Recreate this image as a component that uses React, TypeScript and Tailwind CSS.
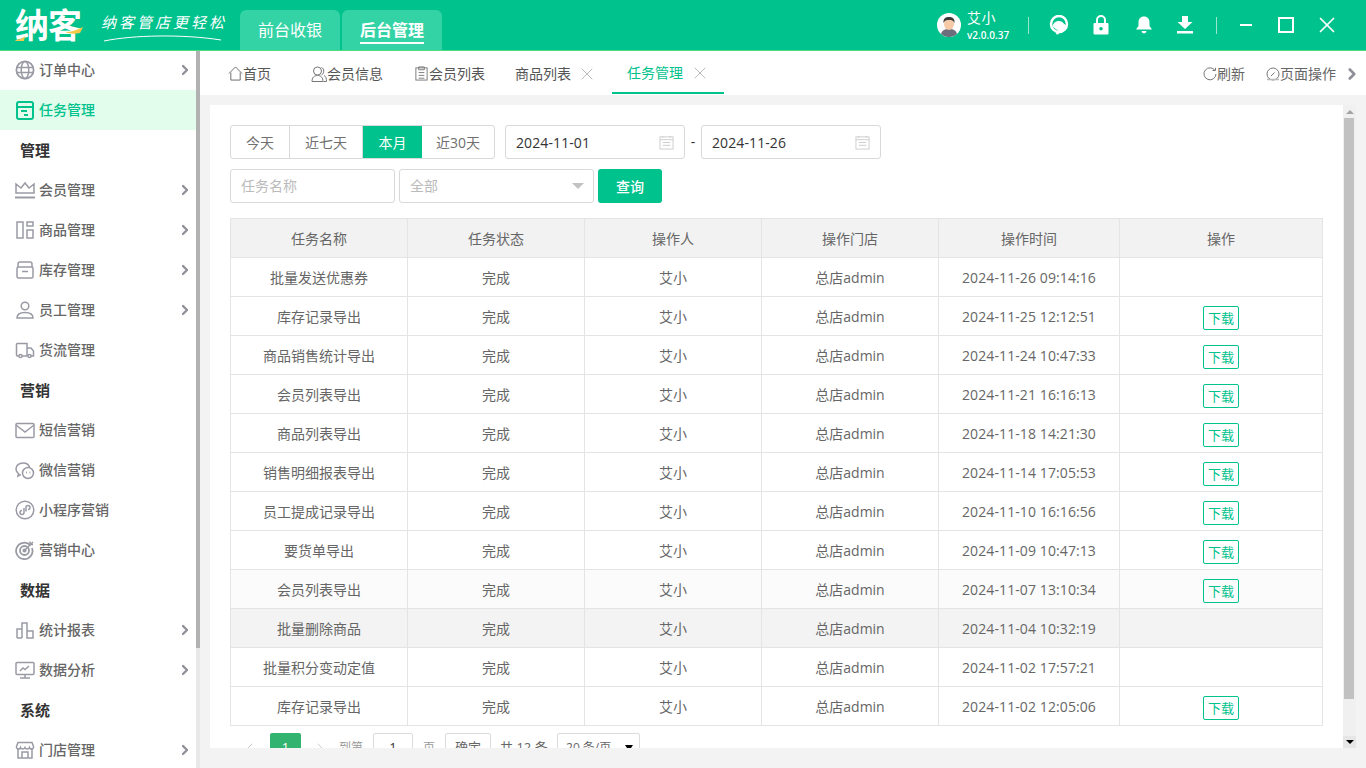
import type { ReactNode } from 'react';
import { ChevronLeft, ChevronRight, X } from 'lucide-react';

const FONT = 'font-["Open_Sans","Noto_Sans_CJK_SC",sans-serif]';

// sidebar line icons, all on a 20x20 box
const Ico = ({ children }: { children: ReactNode }) => (
  <svg viewBox="0 0 20 20" className="h-5 w-5 shrink-0" fill="none" stroke="currentColor" strokeWidth="1.5">
    {children}
  </svg>
);

const icons: Record<string, ReactNode> = {
  globe: (
    <Ico>
      <circle cx="10" cy="10" r="8.6" strokeWidth="1.8" />
      <ellipse cx="10" cy="10" rx="3.8" ry="8.6" />
      <path d="M1.5 7.5h17M1.5 12.5h17" />
    </Ico>
  ),
  task: (
    <Ico>
      <rect x="2" y="2" width="16" height="17" rx="2" strokeWidth="2" />
      <path d="M2 7h16" strokeWidth="2" />
      <path d="M6 11h6M9 15h4" strokeWidth="1.8" />
    </Ico>
  ),
  crown: (
    <Ico>
      <path d="M1 13V4l5 4 4-5 4 5 5-4v9z" />
      <path d="M0 17.5h20" strokeWidth="2" />
    </Ico>
  ),
  goods: (
    <Ico>
      <rect x="2" y="2" width="6" height="16" />
      <rect x="12" y="2" width="6" height="4" />
      <rect x="12" y="10" width="6" height="8" />
    </Ico>
  ),
  box: (
    <Ico>
      <path d="M3 7V4a2 2 0 0 1 2-2h10a2 2 0 0 1 2 2v3" />
      <rect x="2" y="7" width="16" height="11" rx="1.5" />
      <path d="M7 11.5h6" />
    </Ico>
  ),
  user: (
    <Ico>
      <circle cx="10" cy="6" r="3.8" />
      <path d="M2 18c0-3.5 3-5.5 8-5.5s8 2 8 5.5z" />
    </Ico>
  ),
  truck: (
    <Ico>
      <path d="M4 16H2.5A1 1 0 0 1 1.500 15V4.500A1 1 0 0 1 2.500 3.500H12V16H7" />
      <path d="M12 8h4l2.500 3v5H16" />
      <circle cx="5.500" cy="16" r="1.600" />
      <circle cx="14.500" cy="16" r="1.600" />
    </Ico>
  ),
  mail: (
    <Ico>
      <rect x="1" y="3.500" width="18" height="14" rx="1" />
      <path d="M1 5l9 7 9-7" />
    </Ico>
  ),
  wechat: (
    <Ico>
      <path d="M8 3C4 3 1 5.500 1 9c0 2 1 3.500 2.500 4.500L3 16l2.800-1.500" />
      <path d="M8 3c3.500 0 6 2 6.500 4.500" />
      <circle cx="13" cy="13" r="5.500" />
      <path d="M11 12.500h.8M14.500 12.500h.8" strokeWidth="1.800" />
    </Ico>
  ),
  mini: (
    <Ico>
      <circle cx="10" cy="10" r="8.800" />
      <path d="M9 8v4.500a2 2 0 1 1-2-2M11 11.500V7.500a2 2 0 1 1 2 2" />
    </Ico>
  ),
  target: (
    <Ico>
      <path d="M15.500 5.500A8.200 8.200 0 1 0 17 8" strokeWidth="1.800" />
      <circle cx="9.500" cy="10.500" r="4.500" strokeWidth="1.800" />
      <circle cx="9.500" cy="10.500" r="1.300" fill="currentColor" />
      <path d="M10 10l8-8M15 1.500v3h3" />
    </Ico>
  ),
  chart: (
    <Ico>
      <path d="M2 18V9h5v9M7 18V3h5v15M12 18v-7h6v7zM2 18h5" />
    </Ico>
  ),
  monitor: (
    <Ico>
      <rect x="1" y="2.500" width="18" height="12" rx="1" />
      <path d="M5 11l3-3 2 1.500 4-3.500M10 14.500V18M5 18h10" />
    </Ico>
  ),
  store: (
    <Ico>
      <path d="M3 8v10h14V8" />
      <path d="M3 2.500h14l1.500 4a2 2 0 0 1-4 1 2.500 2.500 0 0 1-4.500 0 2.500 2.500 0 0 1-4.500 0 2 2 0 0 1-4-1z" />
      <path d="M7 18v-6h6v6" />
    </Ico>
  ),
};

type Nav = { label: string; icon?: string; arrow?: boolean; active?: boolean };

const nav: Nav[] = [
  { label: '订单中心', icon: 'globe', arrow: true },
  { label: '任务管理', icon: 'task', active: true },
  { label: '管理' },
  { label: '会员管理', icon: 'crown', arrow: true },
  { label: '商品管理', icon: 'goods', arrow: true },
  { label: '库存管理', icon: 'box', arrow: true },
  { label: '员工管理', icon: 'user', arrow: true },
  { label: '货流管理', icon: 'truck' },
  { label: '营销' },
  { label: '短信营销', icon: 'mail' },
  { label: '微信营销', icon: 'wechat' },
  { label: '小程序营销', icon: 'mini' },
  { label: '营销中心', icon: 'target' },
  { label: '数据' },
  { label: '统计报表', icon: 'chart', arrow: true },
  { label: '数据分析', icon: 'monitor', arrow: true },
  { label: '系统' },
  { label: '门店管理', icon: 'store', arrow: true },
];

const rows = [
  { name: '批量发送优惠券', time: '2024-11-26 09:14:16', dl: false },
  { name: '库存记录导出', time: '2024-11-25 12:12:51', dl: true },
  { name: '商品销售统计导出', time: '2024-11-24 10:47:33', dl: true },
  { name: '会员列表导出', time: '2024-11-21 16:16:13', dl: true },
  { name: '商品列表导出', time: '2024-11-18 14:21:30', dl: true },
  { name: '销售明细报表导出', time: '2024-11-14 17:05:53', dl: true },
  { name: '员工提成记录导出', time: '2024-11-10 16:16:56', dl: true },
  { name: '要货单导出', time: '2024-11-09 10:47:13', dl: true },
  { name: '会员列表导出', time: '2024-11-07 13:10:34', dl: true, bg: 'bg-[#fbfbfb]' },
  { name: '批量删除商品', time: '2024-11-04 10:32:19', dl: false, bg: 'bg-[#f3f3f3]' },
  { name: '批量积分变动定值', time: '2024-11-02 17:57:21', dl: false },
  { name: '库存记录导出', time: '2024-11-02 12:05:06', dl: true },
];

function Header() {
  return (
    <header className="flex h-[51px] shrink-0 items-stretch border-b border-[#4fdc86] bg-[#00c28c] text-white">
      <div className="relative ml-[15px] flex w-[70px] items-center">
        <span className="text-[34px] font-bold leading-none tracking-[-1px]">纳客</span>
        <svg viewBox="0 0 70 30" className="absolute left-0 top-[12px] h-[30px] w-[70px]" fill="none">
          <path d="M0 28c3 0 7-1 10-4l-1 5H1z" fill="#f7c948" />
          <path d="M50 20c6 0 12-2 18-5l-3 6c-5 1-10 1-15-1z" fill="#f7c948" />
        </svg>
      </div>
      <div className="relative ml-[16px] w-[125px] pt-[13px] text-[15px] italic leading-[18px] tracking-[3px] whitespace-nowrap">
        纳客管店更轻松
        <svg viewBox="0 0 120 8" className="absolute left-[2px] top-[34px] h-[8px] w-[120px]" fill="none">
          <path d="M1 7C30 1 80 0 118 6" stroke="white" strokeWidth="1" />
        </svg>
      </div>
      <div className="ml-[14px] flex items-end gap-[2px]">
        <div className="flex h-[40px] w-[100px] items-center justify-center rounded-t-md bg-[#34d3a5] text-base">前台收银</div>
        <div className="flex h-[40px] w-[100px] items-center justify-center rounded-t-md bg-[#34d3a5] text-base font-bold">
          <span className="mt-[2px] border-b-2 border-white leading-[24px]">后台管理</span>
        </div>
      </div>

      <div className="ml-auto flex items-center">
        <svg viewBox="0 0 24 24" className="h-6 w-6">
          <circle cx="12" cy="12" r="12" fill="white" />
          <path d="M4 21c1-4 4-5 8-5s7 1 8 5a12 12 0 0 1-16 0z" fill="#6b6f7b" />
          <ellipse cx="12" cy="11" rx="5" ry="6" fill="#f5c9a6" />
          <path d="M6.500 10C6 5 9 4 12 4s6 1 5.500 6c-1-2.500-3-3-5.500-3s-4.500.5-5.500 3z" fill="#3a3a3a" />
        </svg>
        <div className="ml-[6px] w-[61px]">
          <div className="text-[14px] leading-[17px] tracking-[0.5px]">艾小</div>
          <div className="mt-[2px] text-[10px] font-semibold leading-[14px]">v2.0.0.37</div>
        </div>
        <div className="h-[17px] w-px bg-white/60" />
        <svg viewBox="0 0 20 20" className="ml-[20px] h-5 w-5" fill="none" stroke="white">
          <circle cx="10" cy="9" r="8" strokeWidth="2.500" />
          <path d="M4 12c0-4 3-5.500 6-5.500 2 0 4 1 5 3l2 1c-1 3-3 5-6 6.500" fill="white" strokeWidth="1" />
          <circle cx="8.500" cy="18" r="1.500" fill="white" stroke="none" />
        </svg>
        <svg viewBox="0 0 16 20" className="ml-[24px] h-5 w-4" fill="white">
          <path d="M3 8V5a5 5 0 0 1 10 0v3h-2V5a3 3 0 0 0-6 0v3z" />
          <path fillRule="evenodd" d="M1.500 8h13a1 1 0 0 1 1 1v9.500a1 1 0 0 1-1 1h-13a1 1 0 0 1-1-1V9a1 1 0 0 1 1-1zM8 12a1.800 1.800 0 1 0 0 3.600A1.800 1.800 0 0 0 8 12z" />
        </svg>
        <svg viewBox="0 0 18 20" className="ml-[26px] h-5 w-[18px]" fill="white">
          <path d="M9 1.500c3.500 0 5.500 2.500 5.500 6v3.500l2.500 3.500H1L3.500 11V7.500c0-3.500 2-6 5.500-6z" />
          <path d="M6.500 16h5a2.500 2.500 0 0 1-5 0z" />
        </svg>
        <svg viewBox="0 0 16 18" className="ml-[24px] h-[18px] w-4" fill="white">
          <path d="M5 0h6v6h4.500L8 13 .5 6H5z" />
          <rect x="0" y="15" width="16" height="2.500" />
        </svg>
        <div className="ml-[23px] h-[17px] w-px bg-white/60" />
        <div className="ml-[23px] h-[2px] w-[12px] bg-white" />
        <div className="ml-[26px] h-[16px] w-[16px] border-2 border-white" />
        <X className="ml-[20px] mr-[26px] h-[26px] w-[26px]" strokeWidth={1.6} />
      </div>
    </header>
  );
}

function Sidebar() {
  return (
    <aside className="flex w-[200px] shrink-0 bg-white">
      <div className="-mt-px w-[196px] overflow-hidden">
        {nav.map((n) =>
          n.icon ? (
            <div
              key={n.label}
              className={`flex h-10 items-center pl-[15px] pr-[3px] text-sm font-medium ${
                n.active ? 'bg-[#e3fded] text-[#00c28c]' : 'text-[#666] '
              }`}
            >
              <span className={n.active ? 'text-[#00c28c]' : 'text-[#9a9aa5]'}>{icons[n.icon]}</span>
              <span className="ml-[4px] flex-1 leading-[20px]">{n.label}</span>
              {n.arrow && <ChevronRight className="h-4 w-4 text-[#8f8f99]" strokeWidth={3.5} />}
            </div>
          ) : (
            <div key={n.label} className="flex h-10 items-center pl-[20px] text-[15px] font-bold text-[#333]">
              {n.label}
            </div>
          ),
        )}
      </div>
      <div className="flex w-[4px] flex-col">
        <div className="h-[597px] bg-[#b2b2b2]" />
        <div className="flex-1 bg-[#e8e8e8]" />
      </div>
    </aside>
  );
}

const HomeIcon = () => (
  <svg viewBox="0 0 16 16" className="h-[15px] w-[15px]" fill="none" stroke="#666">
    <path d="M1 8l7-7 7 7M3 7v8h10V7" />
  </svg>
);
const PeopleIcon = () => (
  <svg viewBox="0 0 16 16" className="h-4 w-4" fill="none" stroke="#777">
    <circle cx="6.500" cy="5" r="4" />
    <path d="M1 15.500c0-4 2-6 5.500-6s5.500 2 5.500 6zM10.500 1.500c3 1 3 6 0 7.500M13 9.500c2 1 2.500 3 2.500 6h-3" />
  </svg>
);
const ClipIcon = () => (
  <svg viewBox="0 0 16 16" className="h-[15px] w-[15px]" fill="none" stroke="#777">
    <rect x="2" y="2" width="12" height="13" />
    <path d="M5 1h6v3H5zM5 7h6M5 10h6M5 13h6" />
  </svg>
);
const CalIcon = () => (
  <svg viewBox="0 0 16 16" className="h-[15px] w-[15px]" fill="none" stroke="#ccc">
    <rect x="1" y="2" width="14" height="13" />
    <path d="M1 5h14M4 1v2M12 1v2M4 8h8M4 11h8" />
  </svg>
);

function Tabs() {
  return (
    <div className="flex h-[44px] shrink-0 items-center bg-white text-sm text-[#555]">
      <div className="ml-[28px] flex items-center pt-px"><HomeIcon />首页</div>
      <div className="ml-[40px] flex items-center pt-px"><PeopleIcon />会员信息</div>
      <div className="ml-[31px] flex items-center pt-px"><ClipIcon />会员列表</div>
      <div className="ml-[30px] flex items-center pt-px">
        商品列表
        <X className="ml-[6px] h-5 w-5 text-[#bbb]" strokeWidth={1.2} />
      </div>
      <div className="ml-[15px] flex h-[43px] items-center self-start border-b-2 border-[#00c28c] pl-[15px] pr-[14px] pt-[2px] text-[#00c28c]">
        任务管理
        <X className="ml-[7px] h-5 w-5 text-[#bbb]" strokeWidth={1.2} />
      </div>
      <div className="ml-auto flex items-center pt-px text-[#666]">
        <svg viewBox="0 0 14 14" className="h-[14px] w-[14px]" fill="none" stroke="#777">
          <path d="M12 3.500A6 6 0 1 0 13 7M9.500 3.500H12.500V.8" />
        </svg>
        刷新
        <svg viewBox="0 0 14 14" className="ml-[21px] h-[14px] w-[14px]" fill="none" stroke="#777">
          <circle cx="7" cy="7" r="6" />
          <path d="M5 9l3.500-3.500" />
          <path d="M1 12.500h12" stroke="#bbb" strokeWidth="1.500" />
        </svg>
        页面操作
        <ChevronRight className="ml-[7px] mr-[5px] h-[18px] w-[18px] text-[#8f8f99]" strokeWidth={3.5} />
      </div>
    </div>
  );
}

function Filters() {
  const seg = 'flex h-full items-center justify-center border-r border-[#d9d9d9] pt-px';
  const box = 'flex h-[34px] items-center rounded-[3px] border border-[#d9d9d9] bg-white';
  return (
    <>
      <div className="flex items-center">
        <div className="flex h-[34px] w-[265px] overflow-hidden rounded-[3px] border border-[#d9d9d9] text-sm text-[#707070]">
          <div className={`${seg} w-[59px]`}>今天</div>
          <div className={`${seg} w-[73px]`}>近七天</div>
          <div className="flex h-full w-[59px] items-center justify-center bg-[#00c28c] pt-px text-white">本月</div>
          <div className="flex h-full flex-1 items-center justify-center pt-px">近30天</div>
        </div>
        <div className={`${box} ml-[10px] w-[180px] justify-between px-[10px] text-sm text-[#333]`}>
          <span className="pt-px tracking-[0.1px]">2024-11-01</span>
          <CalIcon />
        </div>
        <span className="w-[16px] text-center text-sm text-[#333]">-</span>
        <div className={`${box} w-[180px] justify-between px-[10px] text-sm text-[#333]`}>
          <span className="pt-px tracking-[0.1px]">2024-11-26</span>
          <CalIcon />
        </div>
      </div>
      <div className="mt-[10px] flex items-center">
        <div className={`${box} w-[165px] px-[10px] text-sm text-[#bbb]`}>任务名称</div>
        <div className={`${box} ml-[4px] w-[195px] justify-between pl-[10px] pr-[9px] text-sm text-[#bbb]`}>
          全部
          <span className="h-0 w-0 border-x-[6px] border-t-[6px] border-x-transparent border-t-[#c2c2c2]" />
        </div>
        <div className="ml-[4px] flex h-[34px] w-[64px] items-center justify-center rounded-[3px] bg-[#00c28c] pt-px text-sm font-medium text-white">
          查询
        </div>
      </div>
    </>
  );
}

function TaskTable() {
  const th = 'h-[39px] border border-[#e4e4e4] bg-[#f2f2f2] pt-[2px] text-sm font-normal text-[#666]';
  const td = 'h-[39px] border border-[#e4e4e4] pt-[2px] text-center text-sm text-[#666]';
  return (
    <table className="mt-[15px] w-[1092px] table-fixed border-collapse">
      <colgroup>
        <col className="w-[177px]" />
        <col className="w-[177px]" />
        <col className="w-[177px]" />
        <col className="w-[177px]" />
        <col className="w-[181px]" />
        <col className="w-[203px]" />
      </colgroup>
      <thead>
        <tr>
          {['任务名称', '任务状态', '操作人', '操作门店', '操作时间', '操作'].map((h) => (
            <th key={h} className={th}>{h}</th>
          ))}
        </tr>
      </thead>
      <tbody>
        {rows.map((r) => (
          <tr key={r.time} className={r.bg}>
            <td className={td}>{r.name}</td>
            <td className={td}>完成</td>
            <td className={td}>艾小</td>
            <td className={td}>总店admin</td>
            <td className={`${td} tracking-[0.1px]`}>{r.time}</td>
            <td className={td}>
              {r.dl && (
                <span className="mt-[2px] inline-flex h-6 w-9 items-center justify-center rounded-[2px] border border-[#00c28c] text-[13px] text-[#00c28c]">
                  下载
                </span>
              )}
            </td>
          </tr>
        ))}
      </tbody>
    </table>
  );
}

function Pager() {
  const box = 'flex h-[30px] items-center rounded-[2px] border border-[#dcdcdc]';
  return (
    <div className="mt-[6px] flex h-[30px] items-center pt-px text-[13px] text-[#666]">
      <span className="flex w-[40px] justify-center text-[#ccc]">
        <ChevronLeft className="h-4 w-4" strokeWidth={1.5} />
      </span>
      <div className="flex h-[30px] w-[31px] items-center justify-center rounded-[2px] bg-[#33b370] text-white">1</div>
      <span className="flex w-[38px] justify-center text-[#ccc]">
        <ChevronRight className="h-4 w-4" strokeWidth={1.5} />
      </span>
      <span className="text-[12px] text-[#999]">到第</span>
      <div className={`${box} ml-[10px] w-[40px] justify-center text-[#333]`}>1</div>
      <span className="ml-[10px] text-[12px] text-[#999]">页</span>
      <div className={`${box} ml-[10px] w-[46px] justify-center`}>确定</div>
      <span className="ml-[9px] w-[48px] whitespace-nowrap">共 12 条</span>
      <div className={`${box} ml-[9px] w-[83px] justify-between pl-[8px] pr-[6px] text-[12px]`}>
        20 条/页
        <span className="h-0 w-0 border-x-[4px] border-t-[6px] border-x-transparent border-t-black" />
      </div>
    </div>
  );
}

function ScrollTrack() {
  return (
    <div className="flex w-[13px] shrink-0 flex-col bg-[#f0f0f0]">
      <div className="flex h-[13px] items-center justify-center">
        <span className="h-0 w-0 border-x-[4px] border-b-[4px] border-x-transparent border-b-[#a3a3a3]" />
      </div>
      <div className="mx-px h-[581px] w-[10px] bg-[#c1c1c1]" />
      <div className="flex-1" />
      <div className="flex h-[12px] items-center justify-center bg-[#e6e6e6]">
        <span className="h-0 w-0 border-x-[4px] border-t-[4px] border-x-transparent border-t-black" />
      </div>
    </div>
  );
}

export default function App() {
  return (
    <div className={`flex h-[768px] w-[1366px] flex-col overflow-hidden bg-[#f3f3f3] ${FONT}`}>
      <Header />
      <div className="flex min-h-0 flex-1">
        <Sidebar />
        <main className="flex min-w-0 flex-1 flex-col">
          <Tabs />
          <div className="flex min-h-0 flex-1 pb-[20px] pl-[10px] pr-[10px] pt-[10px]">
            <div className="min-w-0 flex-1 overflow-hidden bg-white px-[20px] pt-[20px]">
              <Filters />
              <TaskTable />
              <Pager />
            </div>
            <ScrollTrack />
          </div>
        </main>
      </div>
    </div>
  );
}
